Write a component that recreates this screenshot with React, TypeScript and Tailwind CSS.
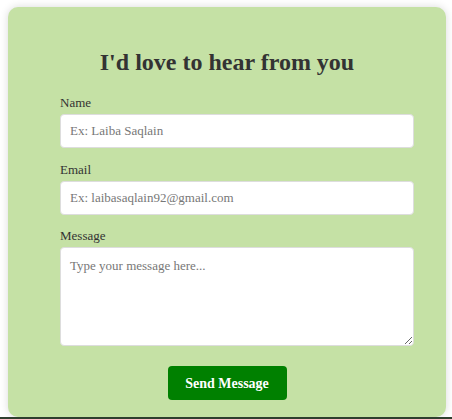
export default function App() {
  return (
    <div className="h-[419px] w-[452px] overflow-hidden bg-white font-['Liberation_Serif',serif]">
      <div className="ml-2 mt-[7px] flex h-[410px] w-[438px] flex-col items-center rounded-[10px] bg-[#c5e1a5] shadow-[0_0_8px_rgba(0,0,0,0.15)]">
        <h1 className="mt-[38px] text-[24px] font-bold leading-[34px] text-[#333]">I'd love to hear from you</h1>
        <form className="mt-[16px] w-[334px]" onSubmit={(e) => e.preventDefault()}>
          <label className="block text-[13px] leading-[16px] text-[#333]">Name</label>
          <input
            type="text"
            placeholder="Ex: Laiba Saqlain"
            className="mt-[3px] block h-[34px] w-[354px] rounded-[4px] border border-[#ddd] bg-white px-[9px] font-['Liberation_Serif',serif] text-[13px] placeholder:text-[#777]"
          />
          <label className="mt-[14px] block text-[13px] leading-[16px] text-[#333]">Email</label>
          <input
            type="email"
            placeholder="Ex: laibasaqlain92@gmail.com"
            className="mt-[3px] block h-[34px] w-[354px] rounded-[4px] border border-[#ddd] bg-white px-[9px] font-['Liberation_Serif',serif] text-[13px] placeholder:text-[#777]"
          />
          <label className="mt-[13px] block text-[13px] leading-[16px] text-[#333]">Message</label>
          <textarea
            placeholder="Type your message here..."
            className="mt-[3px] block h-[99px] w-[354px] rounded-[4px] border border-[#ddd] bg-white px-[9px] py-[8px] font-['Liberation_Serif',serif] text-[13px] placeholder:text-[#777]"
          />
          <div className="mt-[20px] flex justify-center">
            <button
              type="submit"
              className="h-[34px] w-[119px] rounded-[4px] bg-[#008000] font-['Liberation_Serif',serif] text-[14px] font-bold text-white"
            >
              Send Message
            </button>
          </div>
        </form>
      </div>
      <div className="h-[2px] bg-[#2f3f2f]" />
    </div>
  );
}
